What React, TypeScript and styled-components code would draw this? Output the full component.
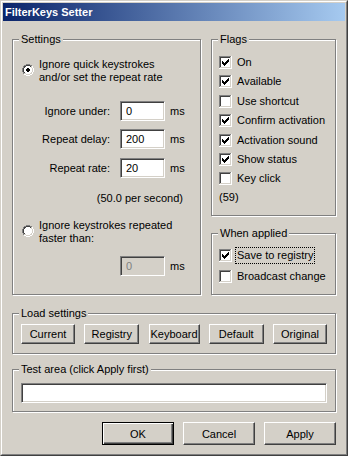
import React from "react";
import styled, { createGlobalStyle, css } from "styled-components";

const Global = createGlobalStyle`
  html, body { margin: 0; padding: 0; background: #D4D0C8; }
  body { font-family: "Liberation Sans", Arial, sans-serif; font-size: 11px; color: #000; }
  * { box-sizing: border-box; }
`;

const FACE = "#D4D0C8";

const Window = styled.div`
  width: 348px;
  height: 456px;
  background: ${FACE};
  border: 1px solid;
  border-color: ${FACE} #404040 #404040 ${FACE};
  display: flex;
  flex-direction: column;
`;

const Frame = styled.div`
  flex: 1;
  border: 1px solid;
  border-color: #fff #808080 #808080 #fff;
  padding: 1px;
  display: flex;
  flex-direction: column;
`;

const TitleBar = styled.div`
  height: 18px;
  background: linear-gradient(to right, #0a246a, #a6caf0);
  color: #fff;
  font-weight: bold;
  font-size: 11px;
  line-height: 18px;
  padding-left: 2px;
  white-space: nowrap;
`;

const Body = styled.div`
  flex: 1;
  display: flex;
  flex-direction: column;
  padding: 12px 9px 8px 9px;
`;

const TopRow = styled.div`
  display: flex;
  gap: 10px;
  height: 262px;
`;

const RightColumn = styled.div`
  width: 125px;
  display: flex;
  flex-direction: column;
  gap: 11px;
`;

const Group = styled.fieldset<{ $w?: number; $h: number; $mt?: number }>`
  margin: ${(p) => p.$mt ?? 0}px 0 0 0;
  padding: 0;
  min-width: 0;
  border: 1px solid #808080;
  box-shadow: inset 1px 1px #fff, 1px 1px #fff;
  width: ${(p) => (p.$w ? `${p.$w}px` : "auto")};
  height: ${(p) => p.$h}px;
  flex: none;
`;

const Legend = styled.legend`
  padding: 0 2px;
  margin-left: 6px;
  line-height: 13px;
  background: ${FACE};
`;

const GroupBody = styled.div<{ $pad: string }>`
  padding: ${(p) => p.$pad};
  display: flex;
  flex-direction: column;
`;

/* ---------- Settings ---------- */

const OptionRow = styled.div<{ $mt: number }>`
  display: flex;
  align-items: flex-start;
  gap: 5px;
  margin-top: ${(p) => p.$mt}px;
`;

const RadioWrap = styled.span`
  display: block;
  width: 12px;
  height: 12px;
  margin-top: 6px;
  flex: none;
`;

const OptionText = styled.div`
  line-height: 13px;
  white-space: nowrap;
`;

const FieldRow = styled.div<{ $mt: number }>`
  display: flex;
  align-items: center;
  height: 20px;
  margin-top: ${(p) => p.$mt}px;
`;

const FieldLabel = styled.span`
  width: 88px;
  margin-right: 10px;
  text-align: right;
  line-height: 13px;
  white-space: nowrap;
`;

const Edit = styled.input<{ $w: number }>`
  width: ${(p) => p.$w}px;
  height: 20px;
  margin: 0;
  padding: 0 0 0 5px;
  font: inherit;
  color: #000;
  background: #fff;
  border: 1px solid;
  border-color: #808080 #fff #fff #808080;
  box-shadow: inset 1px 1px #404040, inset -1px -1px ${FACE};
  outline: none;
  &:disabled {
    background: ${FACE};
    color: #808080;
  }
`;

const Unit = styled.span`
  margin-left: 5px;
  line-height: 13px;
`;

const RateNote = styled.div`
  width: 161px;
  margin-top: 14px;
  text-align: right;
  line-height: 13px;
  white-space: nowrap;
`;

/* ---------- Check boxes ---------- */

const CheckList = styled.div<{ $pt: number; $gap: number }>`
  display: flex;
  flex-direction: column;
  gap: ${(p) => p.$gap}px;
  padding: ${(p) => p.$pt}px 0 0 7px;
`;

const CheckRow = styled.div`
  display: flex;
  align-items: center;
  height: 17px;
  gap: 3px;
`;

const CheckLabel = styled.span<{ $focused?: boolean }>`
  padding: 1px;
  border: 1px dotted ${(p) => (p.$focused ? "#000" : "transparent")};
  line-height: 13px;
  white-space: nowrap;
`;

const Count = styled.div`
  padding-top: 1px;
  line-height: 13px;
`;

/* ---------- Buttons ---------- */

const ButtonRow = styled.div<{ $justify: string; $gap: number }>`
  display: flex;
  justify-content: ${(p) => p.$justify};
  gap: ${(p) => p.$gap}px;
`;

const Button = styled.button<{ $w: number; $h: number; $isDefault?: boolean }>`
  width: ${(p) => p.$w}px;
  height: ${(p) => p.$h}px;
  margin: 0;
  padding: 0;
  font: inherit;
  color: #000;
  background: ${FACE};
  border: 1px solid;
  border-color: #fff #404040 #404040 #fff;
  box-shadow: inset -1px -1px #808080;
  flex: none;
  ${(p) =>
    p.$isDefault &&
    css`
      border-color: #000;
      box-shadow: inset 1px 1px #fff, inset -1px -1px #404040, inset -2px -2px #808080;
    `}
`;

const BottomButtons = styled(ButtonRow)`
  margin-top: 10px;
`;

/* ---------- pixel drawings ---------- */

const PALETTE: Record<string, string> = {
  g: "#808080",
  d: "#404040",
  l: FACE,
  w: "#ffffff",
  b: "#000000",
};

function Pixels({ rows, size }: { rows: string[]; size: number }) {
  const rects: React.ReactNode[] = [];
  rows.forEach((row, y) => {
    row.split("").forEach((ch, x) => {
      const fill = PALETTE[ch];
      if (fill) rects.push(<rect key={`${x}-${y}`} x={x} y={y} width={1} height={1} fill={fill} />);
    });
  });
  return (
    <svg width={size} height={size} viewBox={`0 0 ${size} ${size}`} shapeRendering="crispEdges" style={{ display: "block", flex: "none" }}>
      {rects}
    </svg>
  );
}

const RADIO_ON = [
  "....gggg....",
  "..ggddddgg..",
  ".gddwwwwdlw.",
  ".gdwwwwwwlw.",
  "gdwwwbbwwwlw",
  "gdwwbbbbwwlw",
  "gdwwbbbbwwlw",
  "gdwwwbbwwwlw",
  ".gdwwwwwwlw.",
  ".gllwwwwllw.",
  "..wwllllww..",
  "....wwww....",
];
const RADIO_OFF = RADIO_ON.map((r) => r.replace(/b/g, "w"));

const BOX = (checked: boolean) => {
  const check = [
    "......b",
    ".....bb",
    "b...bbb",
    "bb.bbb.",
    "bbbbb..",
    ".bbb...",
    "..b....",
  ];
  const rows: string[] = [];
  for (let y = 0; y < 13; y++) {
    let s = "";
    for (let x = 0; x < 13; x++) {
      let c = "w";
      if (y === 12 || x === 12) c = "w";
      else if (y === 0 || x === 0) c = "g";
      else if (y === 11 || x === 11) c = "l";
      else if (y === 1 || x === 1) c = "d";
      else if (checked && x >= 3 && x <= 9 && y >= 3 && y <= 9 && check[y - 3][x - 3] === "b") c = "b";
      s += c;
    }
    rows.push(s);
  }
  return rows;
};

const BOX_ON = BOX(true);
const BOX_OFF = BOX(false);

function Radio({ checked }: { checked: boolean }) {
  return (
    <RadioWrap>
      <Pixels rows={checked ? RADIO_ON : RADIO_OFF} size={12} />
    </RadioWrap>
  );
}

function Check({ label, checked, focused }: { label: string; checked: boolean; focused?: boolean }) {
  return (
    <CheckRow>
      <Pixels rows={checked ? BOX_ON : BOX_OFF} size={13} />
      <CheckLabel $focused={focused}>{label}</CheckLabel>
    </CheckRow>
  );
}

const flags: [string, boolean][] = [
  ["On", true],
  ["Available", true],
  ["Use shortcut", false],
  ["Confirm activation", true],
  ["Activation sound", true],
  ["Show status", true],
  ["Key click", false],
];

const loadButtons: [string, number][] = [
  ["Current", 54],
  ["Registry", 55],
  ["Keyboard", 51],
  ["Default", 55],
  ["Original", 54],
];

export default function App() {
  return (
    <>
      <Global />
      <Window>
        <Frame>
          <TitleBar>FilterKeys Setter</TitleBar>
          <Body>
            <TopRow>
              <Group $w={189} $h={262}>
                <Legend>Settings</Legend>
                <GroupBody $pad="0 0 0 9px">
                  <OptionRow $mt={12}>
                    <Radio checked />
                    <OptionText>
                      Ignore quick keystrokes
                      <br />
                      and/or set the repeat rate
                    </OptionText>
                  </OptionRow>
                  <FieldRow $mt={17}>
                    <FieldLabel>Ignore under:</FieldLabel>
                    <Edit $w={45} defaultValue="0" readOnly />
                    <Unit>ms</Unit>
                  </FieldRow>
                  <FieldRow $mt={8}>
                    <FieldLabel>Repeat delay:</FieldLabel>
                    <Edit $w={45} defaultValue="200" readOnly />
                    <Unit>ms</Unit>
                  </FieldRow>
                  <FieldRow $mt={9}>
                    <FieldLabel>Repeat rate:</FieldLabel>
                    <Edit $w={45} defaultValue="20" readOnly />
                    <Unit>ms</Unit>
                  </FieldRow>
                  <RateNote>(50.0 per second)</RateNote>
                  <OptionRow $mt={14}>
                    <Radio checked={false} />
                    <OptionText>
                      Ignore keystrokes repeated
                      <br />
                      faster than:
                    </OptionText>
                  </OptionRow>
                  <FieldRow $mt={11}>
                    <FieldLabel />
                    <Edit $w={45} defaultValue="0" disabled />
                    <Unit>ms</Unit>
                  </FieldRow>
                </GroupBody>
              </Group>
              <RightColumn>
                <Group $h={183}>
                  <Legend>Flags</Legend>
                  <CheckList $pt={8} $gap={2.4}>
                    {flags.map(([l, c]) => (
                      <Check key={l} label={l} checked={c} />
                    ))}
                    <Count>(59)</Count>
                  </CheckList>
                </Group>
                <Group $h={68}>
                  <Legend>When applied</Legend>
                  <CheckList $pt={7} $gap={4}>
                    <Check label="Save to registry" checked focused />
                    <Check label="Broadcast change" checked={false} />
                  </CheckList>
                </Group>
              </RightColumn>
            </TopRow>
            <Group $h={47} $mt={12}>
              <Legend>Load settings</Legend>
              <GroupBody $pad="4px 8px 0 8px">
                <ButtonRow $justify="space-between" $gap={0}>
                  {loadButtons.map(([l, w]) => (
                    <Button key={l} $w={w} $h={20}>
                      {l}
                    </Button>
                  ))}
                </ButtonRow>
              </GroupBody>
            </Group>
            <Group $h={49} $mt={9}>
              <Legend>Test area (click Apply first)</Legend>
              <GroupBody $pad="7px 8px 0 8px">
                <Edit $w={306} defaultValue="" readOnly />
              </GroupBody>
            </Group>
            <BottomButtons $justify="flex-end" $gap={9}>
              <Button $w={72} $h={23} $isDefault>
                OK
              </Button>
              <Button $w={72} $h={23}>
                Cancel
              </Button>
              <Button $w={72} $h={23}>
                Apply
              </Button>
            </BottomButtons>
          </Body>
        </Frame>
      </Window>
    </>
  );
}
